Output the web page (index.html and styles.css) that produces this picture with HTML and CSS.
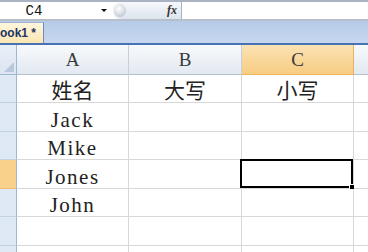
FILE: index.html
```html
<!DOCTYPE html>
<html>
<head>
<meta charset="utf-8">
<link rel="stylesheet" href="styles.css">
</head>
<body>
<div class="app">
  <div class="fbar">
    <div class="namebox">
      <span class="ref">C4</span>
      <span class="drop"></span>
    </div>
    <div class="fxzone">
      <span class="grip"></span>
      <span class="fx">fx</span>
    </div>
    <div class="formula"></div>
  </div>
  <div class="tabs">
    <div class="tab"><span class="tabtext">ook1 *</span></div>
  </div>
  <div class="grid">
    <div class="corner"></div>
    <div class="ch">A</div>
    <div class="ch">B</div>
    <div class="ch sel">C</div>
    <div class="ch last"></div>

    <div class="rh"></div>
    <div class="c">姓名</div>
    <div class="c">大写</div>
    <div class="c">小写</div>
    <div class="c last"></div>

    <div class="rh"></div>
    <div class="c lat">Jack</div>
    <div class="c"></div>
    <div class="c"></div>
    <div class="c last"></div>

    <div class="rh"></div>
    <div class="c lat">Mike</div>
    <div class="c"></div>
    <div class="c"></div>
    <div class="c last"></div>

    <div class="rh sel"></div>
    <div class="c lat">Jones</div>
    <div class="c"></div>
    <div class="c active"></div>
    <div class="c last"></div>

    <div class="rh"></div>
    <div class="c lat">John</div>
    <div class="c"></div>
    <div class="c"></div>
    <div class="c last"></div>

    <div class="rh"></div>
    <div class="c"></div>
    <div class="c"></div>
    <div class="c"></div>
    <div class="c last"></div>

    <div class="rh"></div>
    <div class="c"></div>
    <div class="c"></div>
    <div class="c"></div>
    <div class="c last"></div>
  </div>
</div>
</body>
</html>
```

FILE: styles.css
```css
html, body {
  margin: 0;
  padding: 0;
  background: #ffffff;
  overflow: hidden;
}
.app {
  width: 368px;
  height: 252px;
  overflow: hidden;
  font-family: "Liberation Serif", "Noto Sans CJK SC", serif;
}

/* formula bar */
.fbar {
  display: flex;
  height: 21px;
  box-sizing: border-box;
  border-top: 2px solid #a9b3c1;
  border-bottom: 2px solid #b7bfca;
  background: #ffffff;
}
.namebox {
  width: 113px;
  display: flex;
  align-items: center;
  position: relative;
}
.ref {
  width: 68px;
  text-align: center;
  font-family: "Liberation Mono", monospace;
  font-size: 14px;
  color: #111;
}
.drop {
  margin-left: 33px;
  width: 0;
  height: 0;
  border-left: 3px solid transparent;
  border-right: 3px solid transparent;
  border-top: 3px solid #111;
}
.fxzone {
  width: 69px;
  display: flex;
  align-items: center;
  justify-content: flex-end;
  background: linear-gradient(#f6f8fb, #dde4ed);
  border-right: 1px solid #a7b2c2;
  border-radius: 8px 0 0 8px;
  position: relative;
  box-sizing: border-box;
  padding-right: 4px;
}
.grip {
  position: absolute;
  left: 1px;
  top: 2px;
  width: 12px;
  height: 13px;
  border-radius: 50%;
  background: radial-gradient(circle at 40% 35%, #ffffff 0%, #d4d9e0 55%, #aeb6c1 100%);
}
.fx {
  font-family: "Liberation Serif", serif;
  font-style: italic;
  font-weight: bold;
  font-size: 12px;
  color: #333;
}
.formula {
  flex: 1;
  background: #fff;
}

/* sheet tabs */
.tabs {
  height: 24px;
  box-sizing: border-box;
  background: linear-gradient(#b6cbe8, #c7d7ee);
  border-bottom: 2px solid #4772b4;
  overflow: hidden;
  display: flex;
  align-items: flex-end;
}
.tab {
  height: 21px;
  width: 44px;
  box-sizing: border-box;
  background: linear-gradient(#fef6dd, #fbe6b2);
  border-right: 1px solid #6d8cbd;
  border-top: 1px solid #9fb5d6;
  overflow: hidden;
  display: flex;
  align-items: center;
}
.tabtext {
  white-space: nowrap;
  font-family: "Liberation Sans", Arial, sans-serif;
  font-weight: bold;
  font-size: 12px;
  color: #1d3560;
}

/* grid */
.grid {
  display: grid;
  grid-template-columns: 17px 112px 113px 112px 1fr;
  grid-template-rows: 30px 28px 29px 28px 29px 28px 29px 28px;
}
.corner {
  box-sizing: border-box;
  border-right: 1px solid #9eb6ce;
  border-bottom: 1px solid #9eb6ce;
  background: linear-gradient(#e9eff7, #dce5f1);
  position: relative;
}
.corner::after {
  content: "";
  position: absolute;
  right: 2px;
  bottom: 2px;
  width: 0;
  height: 0;
  border-left: 10px solid transparent;
  border-bottom: 10px solid #b9c8dc;
}
.ch {
  box-sizing: border-box;
  border-right: 1px solid #c6cfdb;
  border-bottom: 1px solid #b4c1d2;
  background: linear-gradient(#f7f9fc, #e3e9f1);
  display: flex;
  align-items: center;
  justify-content: center;
  font-family: "Liberation Serif", serif;
  font-size: 19px;
  color: #3a3a3a;
  padding-top: 1px;
}
.ch.sel {
  background: linear-gradient(#fbe2b4, #f7cd82);
  border-bottom: 1px solid #f0b75a;
  border-right: 1px solid #e8b15d;
}
.ch.last {
  border-right: none;
}
.rh {
  box-sizing: border-box;
  border-right: 1px solid #9eb6ce;
  border-bottom: 1px solid #c4d2e3;
  background: #dfe8f5;
}
.rh.sel {
  background: #f9d18b;
  border-bottom-color: #f0bd6c;
}
.c {
  box-sizing: border-box;
  border-right: 1px solid #d8d8d8;
  border-bottom: 1px solid #d8d8d8;
  display: flex;
  align-items: center;
  justify-content: center;
  font-size: 21px;
  color: #222;
  position: relative;
}
.c.lat {
  letter-spacing: 1.5px;
  padding-top: 6px;
}
.c.last {
  border-right: none;
}
.c.active::before {
  content: "";
  position: absolute;
  top: -1px;
  left: -2px;
  right: 0;
  bottom: 0;
  border: 2px solid #000;
}
.c.active::after {
  content: "";
  position: absolute;
  right: -2px;
  bottom: -2px;
  width: 4px;
  height: 4px;
  background: #000;
  border: 1px solid #fff;
}
```
